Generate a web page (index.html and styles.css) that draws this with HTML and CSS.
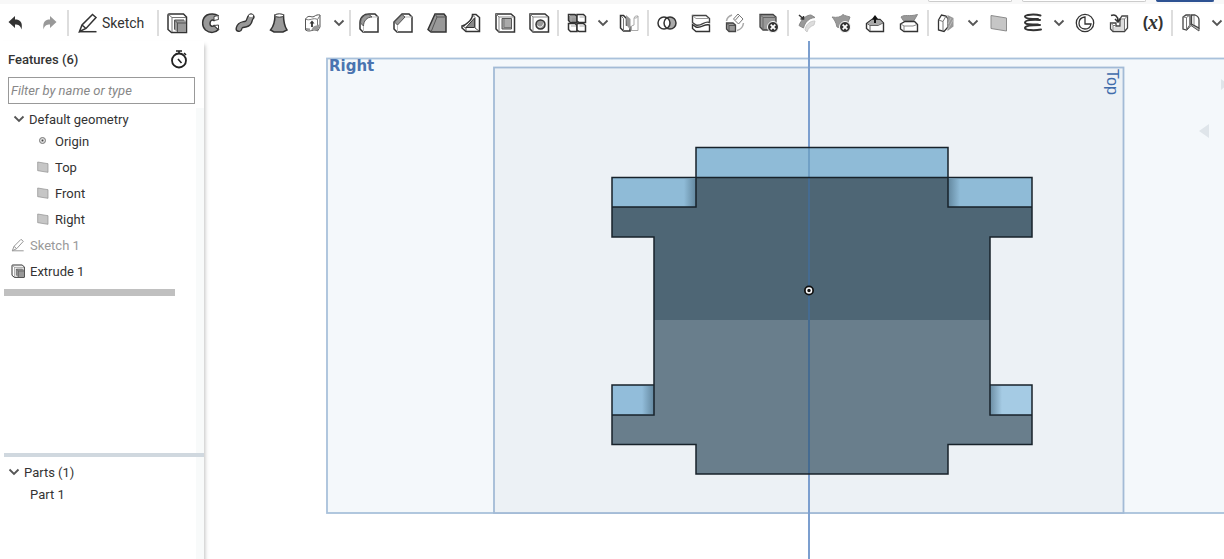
FILE: index.html
```html
<!DOCTYPE html>
<html lang="en">
<head>
    <meta charset="UTF-8">
    <meta name="viewport" content="width=device-width, initial-scale=1.0">
    <title>Part Studio</title>
    <link rel="stylesheet" href="styles.css">
</head>

<body>
<svg class="defs" aria-hidden="true">
    <symbol id="chevron" viewBox="0 0 12 12"><path d="M1.5 3.5 L6 8 L10.500 3.500" fill="none" stroke="#555" stroke-width="1.800"/></symbol>
    <symbol id="pencil" viewBox="0 0 24 24">
        <path d="M3.500 20.500 L6 14 L16.500 3.500 L20 6.500 L10 17.500 Z M6 14 L10 17.500" fill="none" stroke="currentColor" stroke-width="1.500"/>
        <path d="M3 20.700 H20.500" stroke="currentColor" stroke-width="1.500"/>
    </symbol>
    <symbol id="extrude" viewBox="0 0 24 24">
        <path d="M3 4 Q3 3 4 3 H18.500 L21.500 6 V21.500 H6.500 L3 18.500 Z" fill="#fff" stroke="#333" stroke-width="1.500"/>
        <path d="M3.500 3.500 L7 6.500 H21 M7 6.500 V21" fill="none" stroke="#777"/>
        <path d="M9.500 9 H19 L21 10 V21 H12 L9.500 18.500 Z" fill="#999"/>
        <path d="M9.500 18.500 V9 H19 M9.500 9 L12.500 12 H21 M12.500 12 V21" fill="none" stroke="#555"/>
    </symbol>
    <symbol id="plane" viewBox="0 0 24 24"><path d="M4 4.500 L19.500 7 V20 L4 17.500 Z" fill="#c6c6c6" stroke="#8c8c8c"/></symbol>
</svg>

<div class="docbar">
    <button class="doc-btn" aria-label="Help"></button>
    <button class="doc-btn doc-wide" aria-label="Account"></button>
    <button class="doc-btn doc-share" aria-label="Share"></button>
</div>

<div class="toolbar">
    <button class="tool undo" aria-label="Undo"><svg viewBox="0 0 24 24"><path d="M4.500 11 L11 5 V8.500 C16 8.500 19 11 17.500 18.500 C16.500 14.500 14.500 13.500 11 13.500 V17 Z" fill="#333"/></svg></button>
    <button class="tool" aria-label="Redo"><svg viewBox="0 0 24 24"><path d="M19.500 11 L13 5 V8.500 C8 8.500 5.500 11 6.500 18.500 C7.500 14.500 9.500 13.500 13 13.500 V17 Z" fill="#999"/></svg></button>
    <span class="sep"></span>
    <button class="sketch"><svg><use href="#pencil"/></svg>Sketch</button>
    <span class="sep"></span>

    <button class="tool" aria-label="Extrude"><svg><use href="#extrude"/></svg></button>
    <button class="tool" aria-label="Revolve"><svg viewBox="0 0 24 24"><path d="M19 4.500 C16 2.500 11 2.500 8 4 C2.500 7.500 2.500 15 6.500 19 C11 22.500 16.500 22 19.500 18.500 L15 14.500 C13 16 11 15 11 12.500 C11 9.500 13 8.500 15 9.500 Z" fill="#999" stroke="#333" stroke-width="1.500"/><path d="M15 9.500 V5.500 L19 4.500 L19.500 8.500 Z M15 14.500 L19.500 14 V18.500 Z" fill="#fff" stroke="#444"/></svg></button>
    <button class="tool" aria-label="Sweep"><svg viewBox="0 0 24 24"><path d="M6 17.500 C7 13.500 9 14 13 13 C17.500 12 15.500 8 18 6" fill="none" stroke="#333" stroke-width="7" stroke-linecap="round"/><path d="M6 17.500 C7 13.500 9 14 13 13 C17.500 12 15.500 8 18 6" fill="none" stroke="#999" stroke-width="4.300" stroke-linecap="round"/><ellipse cx="18" cy="4.700" rx="2.300" ry="1.200" fill="#fff"/></svg></button>
    <button class="tool" aria-label="Loft"><svg viewBox="0 0 24 24"><path d="M8 4 C8 11 6 16 3.500 19 L7 21 H16 L20 19 C18 16 16.500 11 16.500 4 Z" fill="#999" stroke="#333" stroke-width="1.500"/><ellipse cx="12.300" cy="4.500" rx="4.200" ry="1.700" fill="#fff" stroke="#333"/></svg></button>
    <button class="tool" aria-label="Thicken"><svg viewBox="0 0 24 24"><path d="M4.500 8 C8 3 10 7 13 5.500 C15 4 17 3.500 19 4 V16 L16.500 20 C13 17 9 22 4.500 19 Z" fill="#fff" stroke="#555"/><path d="M4.500 8 C9 10.500 12 6 16.500 8.500 L19 4.500 M16.500 8.500 V20" fill="none" stroke="#777"/><path d="M12 16 C14 14 17 15 18.500 13 V16 L16 19.500 C14 18 12 19 10 19.500 Z M5 17 L9 17.500 V20 L5 19 Z" fill="#999"/><path d="M11 16 V11" stroke="#333" stroke-width="1.800"/><path d="M8.500 12.500 L11 9.500 L13.500 12.500 Z" fill="#333"/></svg></button>
    <button class="more" aria-label="More solid tools"><svg><use href="#chevron"/></svg></button>
    <span class="sep"></span>

    <button class="tool" aria-label="Fillet"><svg viewBox="0 0 24 24"><path d="M3 12 C3 6 7 3 12 3 H18 L21 6 V21 H6 L3 18 Z" fill="#fff" stroke="#333" stroke-width="1.500"/><path d="M3.500 12 C3.500 7 7 3.500 12 3.500 L15 6 C10 6 6.500 10 6.500 15 L3.500 12 Z" fill="#999" stroke="#555"/><path d="M15 6 H21 M6.500 15 V21" stroke="#bbb"/></svg></button>
    <button class="tool" aria-label="Chamfer"><svg viewBox="0 0 24 24"><path d="M3 11 L11 3 H18 L21 6 V21 H6 L3 18 Z" fill="#fff" stroke="#333" stroke-width="1.500"/><path d="M3.500 11 L11 3.500 L14 6 L6.500 14 Z" fill="#999" stroke="#555"/><path d="M14 6 H21 M6.500 14 V21" stroke="#bbb"/></svg></button>
    <button class="tool" aria-label="Draft"><svg viewBox="0 0 24 24"><path d="M10 3 H19 L21 5.500 V21 H6 L3 18.500 Z" fill="#999" stroke="#333" stroke-width="1.500"/><path d="M10 3 L12 6 H21 M12 6 L6 21" fill="none" stroke="#555"/></svg></button>
    <button class="tool" aria-label="Rib"><svg viewBox="0 0 24 24"><path d="M13.500 3.500 H17 L20.500 6.500 V20.500 H7 L3 17 V15 C6 14.500 7 13.500 9 11.500 C12 9 13.500 7 13.500 3.500 Z" fill="#fff" stroke="#333" stroke-width="1.500"/><path d="M15.500 7 V16.500 H7 Z" fill="#888" stroke="#333"/><path d="M13.500 4 L16 6.500 V17 L20 20 M3.500 15 L7 17 V20" fill="none" stroke="#555"/></svg></button>
    <button class="tool" aria-label="Shell"><svg viewBox="0 0 24 24"><path d="M3 3 H18 L21.500 6 V21 H6 L3 18 Z" fill="#fff" stroke="#333" stroke-width="1.500"/><path d="M3 3 L6 6 H21 M6 6 V21" fill="none" stroke="#888"/><path d="M9 7.500 H18.500 V18 H9 Z" fill="#aaa" stroke="#555"/><path d="M11 8 V16.500 H18" fill="none" stroke="#777"/></svg></button>
    <button class="tool" aria-label="Hole"><svg viewBox="0 0 24 24"><path d="M3 3 H18 L21.500 6 V21 H6 L3 18 Z" fill="#fff" stroke="#333" stroke-width="1.500"/><path d="M3 3 L6 6 H21 M6 6 V21" fill="none" stroke="#888"/><circle cx="13.500" cy="13.500" r="4.500" fill="#999" stroke="#333" stroke-width="1.500"/><path d="M10.500 14.500 C12 17.500 16 16 16.500 12.500" fill="none" stroke="#fff"/></svg></button>
    <span class="sep"></span>

    <button class="tool" aria-label="Linear pattern"><svg viewBox="0 0 24 24"><g fill="#fff" stroke="#333" stroke-width="1.500"><path d="M3.500 3.500 H10 L12 5.500 V11.500 H5.500 L3.500 9.500 Z" fill="#999"/><path d="M12 3.500 H18.500 L20.500 5.500 V11.500 H14 L12 10 Z"/><path d="M3.500 12.500 H10 L12 14.500 V20.500 H5.500 L3.500 18.500 Z"/><path d="M12 12.500 H18.500 L20.500 14.500 V20.500 H14 L12 19 Z"/></g><path d="M4 4 L6 6 H11 M6 6 V11 M14.500 6 H20 M6 15 H11 M14.500 15 H20" fill="none" stroke="#aaa"/></svg></button>
    <button class="more" aria-label="More patterns"><svg><use href="#chevron"/></svg></button>
    <button class="tool" aria-label="Mirror"><svg viewBox="0 0 24 24"><path d="M3.500 4.500 H6.500 L9.500 7.500 V14 H11 L13 16 V20 H6.500 L3.500 17 Z" fill="#fff" stroke="#333" stroke-width="1.500"/><path d="M4 5 L6.500 7.500 V20" fill="none" stroke="#777"/><path d="M9 4 L13.500 8 V19 L11 16 L9.500 14 Z" fill="#999"/><path d="M14.500 20 V15 L17 14 V7 L18.500 5 H21 V19.500 H14.500 M17 7 H19.500 L21 5" fill="none" stroke="#aaa"/></svg></button>
    <span class="sep"></span>

    <button class="tool" aria-label="Boolean"><svg viewBox="0 0 24 24"><circle cx="15" cy="12" r="6" fill="#aaa"/><path d="M12 7 A6 6 0 0 1 12 17 A6 6 0 0 1 12 7" fill="#fff"/><circle cx="9" cy="12" r="6" fill="none" stroke="#333" stroke-width="1.500"/><circle cx="15" cy="12" r="6" fill="none" stroke="#333" stroke-width="1.500"/></svg></button>
    <button class="tool" aria-label="Split"><svg viewBox="0 0 24 24"><path d="M3.500 11.500 V4.500 H17 L20.500 7.500 V11.500 C15 9.500 13 15.500 7 14 Z" fill="#fff" stroke="#444" stroke-width="1.400"/><path d="M3.500 4.500 L7 7.500 H20 M7 16 V20" fill="none" stroke="#999"/><path d="M3.500 13.500 V17.500 L7 20.500 H20.500 V14 C15 12.500 13 17.500 7 16 Z" fill="#fff" stroke="#333" stroke-width="1.400"/></svg></button>
    <button class="tool" aria-label="Transform"><svg viewBox="0 0 24 24"><path d="M3.500 12 H10 L12.500 14 V20.500 H6 L3.500 18 Z" fill="#999" stroke="#444" stroke-width="1.300"/><path d="M4 12.500 L6 14.500 H12 M6 14.500 V20" fill="none" stroke="#555"/><path d="M10.500 8 L15 3 L20 8 L15.500 13 Z M12.500 9 L16 5" fill="#fff" stroke="#777"/><path d="M3.500 10 C4 7 6 5 9 4 M20.500 12 C20 16 18 18.500 14 19.500" fill="none" stroke="#aaa" stroke-width="1.500"/></svg></button>
    <button class="tool" aria-label="Delete part"><svg viewBox="0 0 24 24"><path d="M3 3.500 H16 L19 6 V19 H6 L3 16 Z" fill="#999" stroke="#444" stroke-width="1.300"/><path d="M3 3.500 L6 6.500 H19 M6 6.500 V19" fill="none" stroke="#666"/><circle cx="16" cy="16" r="5.500" fill="#333" stroke="#fff"/><path d="M13.700 13.700 L18.300 18.300 M18.300 13.700 L13.700 18.300" stroke="#fff" stroke-width="1.800"/></svg></button>
    <span class="sep"></span>

    <button class="tool" aria-label="Modify fillet"><svg viewBox="0 0 24 24"><path d="M10 19 C11 13 15 10 20 10 L19 14 C16 15 13 17 12 21 Z" fill="#ddd" stroke="#ccc"/><path d="M4 14.500 C6 9 11 4 16 4 L20 6.500 C14 7 10 11 8.500 17 Z" fill="#999" stroke="#888"/><path d="M4 4 L8.500 8 M8.500 5 V8 H5.500" fill="none" stroke="#333" stroke-width="1.500"/></svg></button>
    <button class="tool" aria-label="Delete face"><svg viewBox="0 0 24 24"><path d="M3 6 C8 7 12 6 14 3.500 C16 5 18 5 21 6 L18 14 C14 17 11 17 8 16 C7 11 5 8 3 6 Z" fill="#999" stroke="#888"/><circle cx="16" cy="16" r="5.500" fill="#333" stroke="#fff"/><path d="M13.700 13.700 L18.300 18.300 M18.300 13.700 L13.700 18.300" stroke="#fff" stroke-width="1.800"/></svg></button>
    <button class="tool" aria-label="Move face"><svg viewBox="0 0 24 24"><path d="M3.500 12.500 L9 8.500 H17 L20.500 12 V20.500 H7 L3.500 17.500 Z" fill="#fff" stroke="#333" stroke-width="1.400"/><path d="M4.500 12.500 L7 14 H15 L20 12 L17 9 H9 Z" fill="#aaa"/><path d="M4 12.500 L7 14.500 H15 L20 12 M7 14.500 V20" fill="none" stroke="#666"/><path d="M12 12 V6" stroke="#111" stroke-width="2"/><path d="M9 8 L12 4 L15 8 Z" fill="#111"/></svg></button>
    <button class="tool" aria-label="Replace face"><svg viewBox="0 0 24 24"><path d="M4 6 C8 3 12 6 20.500 3.500 L17 9.500 C13 11 10 8 7 10.500 Z" fill="#999" stroke="#888"/><path d="M3.500 13 L8 10.500 H17.500 L20.500 13.500 V20.500 H7 L3.500 18 Z" fill="#fff" stroke="#333" stroke-width="1.400"/><path d="M4 13 L7 15 H16 L20 13.500 M7 15 V20" fill="none" stroke="#888"/></svg></button>
    <span class="sep"></span>

    <button class="tool" aria-label="Offset surface"><svg viewBox="0 0 24 24"><path d="M3.500 9 L6.500 4 L11 5 L13 8 V16 L9 20.500 L3.500 19 Z" fill="#fff" stroke="#333" stroke-width="1.300"/><path d="M3.500 9 L8 10.500 V20 M8 10.500 L11 5" fill="none" stroke="#777"/><path d="M12.500 4 L18.500 7 V15.500 L12.500 20 Z" fill="#999"/><path d="M13 18 L18 9 M13 13 L16 7" stroke="#bbb"/></svg></button>
    <button class="more" aria-label="More surface tools"><svg><use href="#chevron"/></svg></button>
    <button class="tool" aria-label="Plane"><svg><use href="#plane"/></svg></button>
    <button class="tool" aria-label="Helix"><svg viewBox="0 0 24 24"><path d="M19.500 4.500 C14 3 4 3.500 4 5.500 C4 7.500 10 8 17 8 M19 9 C12 8.500 4 9 4 11.500 C4 13.500 10 13.500 17 13.500 M19 14 C12 14 4 14.500 4 17 C4 19.500 14 19.500 20 18.500" fill="none" stroke="#333" stroke-width="2" stroke-linecap="round"/></svg></button>
    <button class="more" aria-label="More curves"><svg><use href="#chevron"/></svg></button>
    <button class="tool" aria-label="Mate connector"><svg viewBox="0 0 24 24"><circle cx="12" cy="12" r="8.700" fill="#fff" stroke="#333" stroke-width="1.300"/><path d="M12 6 V13 H18 C17.500 16 15 18 12 18 C4 17.500 4 7 12 6 Z" fill="none" stroke="#333" stroke-width="1.300"/></svg></button>
    <button class="tool" aria-label="Import"><svg viewBox="0 0 24 24"><path d="M3.500 12 H9 V15 H13 V8 L15 5 H20.500 V17 L17.500 20.500 H6 L3.500 18 Z" fill="#fff" stroke="#444" stroke-width="1.300"/><path d="M13 8 H17.500 V20 M17.500 8 L20.500 5 M4 12 L6 14.500 V20 M6 14.500 H9" fill="none" stroke="#777"/><path d="M14 9 H17 V19.500 H7 V16 H14 Z" fill="#ddd"/><path d="M4 4.500 C8 3 11 5 11 10 M8 8 L11 11 L13.500 7.500" fill="none" stroke="#333" stroke-width="1.500"/></svg></button>
    <button class="tool variable" aria-label="Variable">(<i>x</i>)</button>
    <span class="sep"></span>

    <button class="tool" aria-label="Sheet metal"><svg viewBox="0 0 24 24"><path d="M4 6 L7 4 H11 V14 L7.500 19 L4 18 Z" fill="#fff" stroke="#444" stroke-width="1.300"/><path d="M7.500 6.500 V19 M4 6 L7.500 6.500 L11 4" fill="none" stroke="#777"/><path d="M11 13.500 L14 12 L20 17 V20 L12 14.500 L8 19" fill="#bbb" stroke="#555"/><path d="M12.500 4 H16 C18.500 5 20 6.500 20 9 V17 L12.500 13 Z" fill="#fff" stroke="#444" stroke-width="1.300"/><path d="M15 5 V14" stroke="#888"/></svg></button>
    <button class="more" aria-label="More sheet metal"><svg><use href="#chevron"/></svg></button>
</div>

<div class="workspace">
    <aside class="sidebar">
        <div class="features">
            <div class="panel-head">
                <h2>Features (6)</h2>
                <button class="timer" aria-label="Rebuild times"><svg viewBox="0 0 20 20"><circle cx="10" cy="11.500" r="7" fill="none" stroke="#222" stroke-width="1.800"/><path d="M7 2 H13 M10 2 V5 M15 4 L17 6 M9 10 L12.500 14" stroke="#222" stroke-width="1.600"/></svg></button>
            </div>
            <input class="filter" type="text" aria-label="Filter features" placeholder="Filter by name or type">
            <div class="tree">
                <button class="row group"><svg><use href="#chevron"/></svg>Default geometry</button>
                <ul>
                    <li class="row child origin"><svg viewBox="0 0 16 16"><circle cx="7.500" cy="7.500" r="3" fill="#ddd" stroke="#777"/><circle cx="7.500" cy="7.500" r="1" fill="#444"/></svg>Origin</li>
                    <li class="row child"><svg><use href="#plane"/></svg>Top</li>
                    <li class="row child"><svg><use href="#plane"/></svg>Front</li>
                    <li class="row child"><svg><use href="#plane"/></svg>Right</li>
                    <li class="row hidden-item"><svg><use href="#pencil"/></svg>Sketch 1</li>
                    <li class="row"><svg><use href="#extrude"/></svg>Extrude 1</li>
                </ul>
                <div class="rollback"></div>
            </div>
        </div>
        <div class="splitter"></div>
        <div class="parts">
            <button class="row group"><svg><use href="#chevron"/></svg>Parts (1)</button>
            <ul>
                <li class="row part">Part 1</li>
            </ul>
        </div>
    </aside>

    <main class="viewport">
        <svg class="scene" viewBox="204 41 1020 518" preserveAspectRatio="xMinYMin slice">
            <defs>
                <linearGradient id="shadeRight"><stop offset="0" stop-color="#456478" stop-opacity="0"/><stop offset="1" stop-color="#456478" stop-opacity=".6"/></linearGradient>
                <linearGradient id="shadeLeft"><stop offset="0" stop-color="#456478" stop-opacity=".6"/><stop offset="1" stop-color="#456478" stop-opacity="0"/></linearGradient>
            </defs>

            <!-- reference planes -->
            <rect x="327" y="58.500" width="960" height="454.500" fill="#f4f8fb" stroke="#a9c1db" stroke-width="1.800"/>
            <rect x="494" y="67.500" width="629.500" height="445.500" fill="#ecf1f5" stroke="#a3bbd6" stroke-width="1.800"/>
            <text class="plane-right" x="329" y="71">Right</text>
            <text class="plane-top" transform="translate(1107 69) rotate(90)">Top</text>
            <path d="M1199 131 L1209 124 V138 Z M1221 79 L1228 84 L1221 90 Z" fill="#dfe5ea"/>
            <path d="M809 41 V559" stroke="#7c9fcf" stroke-width="2"/>

            <!-- part -->
            <path d="M696 148 H948 V178 H696 Z M612 178 H696 V207 H612 Z M948 178 H1032 V207 H948 Z" fill="#8fbbd7"/>
            <path d="M612 385 H654 V415 H612 Z" fill="#92bdda"/>
            <path d="M990 385 H1032 V415 H990 Z" fill="#a5cbe4"/>
            <rect x="684" y="179" width="12" height="28" fill="url(#shadeRight)"/>
            <rect x="642" y="386" width="12" height="28" fill="url(#shadeRight)"/>
            <rect x="948" y="179" width="12" height="28" fill="url(#shadeLeft)"/>
            <rect x="990" y="386" width="12" height="28" fill="url(#shadeLeft)"/>
            <path d="M696 178 H948 V207 H1032 V237 H990 V320 H654 V237 H612 V207 H696 Z" fill="#4e6675"/>
            <path d="M654 320 H990 V415 H1032 V444.500 H948 V474 H696 V444.500 H612 V415 H654 Z" fill="#697e8c"/>
            <path d="M809 148 V178" stroke="#70a0c6" stroke-width="2"/>
            <path d="M809 178 V474" stroke="#456b91" stroke-width="2"/>
            <path d="M696 147.500 H948 V207 H1032 V237 H990 V415 H1032 V444.500 H948 V474 H696 V444.500 H612 V415 H654 V237 H612 V207 H696 Z M696 177.500 H948 M696 177.500 H612 V207 M948 177.500 H1032 V207 M654 385 H612 V415 M990 385 H1032 V415" fill="none" stroke="#17222a" stroke-width="1.500"/>
            <circle cx="809" cy="290.500" r="4" fill="#111" stroke="#111" stroke-width="2"/>
            <circle cx="809" cy="290.500" r="2.500" fill="#111" stroke="#fff" stroke-width="1.500"/>
        </svg>
    </main>
</div>
</body>

</html>
```
FILE: styles.css
```css
*{
    box-sizing: border-box;
}
body{
    margin: 0;
    height: 100vh;
    display: flex;
    flex-direction: column;
    overflow: hidden;
    font-family: Roboto, "Liberation Sans", sans-serif;
    font-size: 14px;
    color: #333;
    background-color: #fff;
}
button{
    margin: 0;
    padding: 0;
    border: 0;
    background: none;
    font: inherit;
    color: inherit;
}
ul{
    margin: 0;
    padding: 0;
    list-style: none;
}
.defs{
    position: absolute;
    width: 0;
    height: 0;
}

/* bottom edge of the document bar */
.docbar{
    display: flex;
    justify-content: flex-end;
    align-items: flex-start;
    gap: 10px;
    flex: none;
    height: 4px;
    padding-right: 10px;
    background-color: #f8f8f8;
}
.doc-btn{
    width: 84px;
    height: 2px;
    border: 1px solid #ccc;
    border-top: 0;
    border-radius: 0 0 3px 3px;
    background-color: #fff;
}
.doc-wide{
    width: 124px;
}
.doc-share{
    width: 58px;
    border-color: #2d5292;
    background-color: #2d5292;
}

.toolbar{
    display: flex;
    align-items: center;
    flex: none;
    height: 37px;
    overflow: hidden;
    background-color: #fff;
}
.tool{
    display: flex;
    align-items: center;
    justify-content: center;
    flex: none;
    width: 34px;
    height: 34px;
}
.tool svg{
    width: 24px;
    height: 24px;
}
.undo{
    width: 32px;
}
.sketch{
    display: flex;
    align-items: center;
    gap: 2px;
    flex: none;
    width: 86px;
    height: 34px;
    padding-left: 6px;
    font-size: 14px;
}
.sketch svg{
    width: 24px;
    height: 24px;
}
.more{
    display: flex;
    align-items: center;
    justify-content: center;
    flex: none;
    width: 18px;
    height: 34px;
}
.more svg{
    width: 12px;
    height: 12px;
}
.sep{
    flex: none;
    width: 2px;
    height: 26px;
    margin: 0 1px;
    background-color: #ddd;
}
.variable{
    font-family: "Liberation Sans", sans-serif;
    font-size: 16px;
    font-weight: bold;
}
.variable i{
    font-family: "Liberation Serif", serif;
    font-size: 20px;
}

.workspace{
    display: flex;
    flex: 1;
    min-height: 0;
}
.sidebar{
    display: flex;
    flex-direction: column;
    flex: none;
    width: 204px;
    z-index: 1;
    background-color: #fff;
    box-shadow: 1px 4px 4px rgba(0,0,0,0.25);
}
.features{
    display: flex;
    flex-direction: column;
    flex: 1;
    min-height: 0;
}
.panel-head{
    display: flex;
    align-items: center;
    justify-content: space-between;
    height: 36px;
    padding: 0 15px 0 8px;
}
.panel-head h2{
    margin: 0;
    font-size: 13px;
    font-weight: 500;
}
.timer{
    width: 20px;
    height: 20px;
}
.timer svg{
    display: block;
    width: 20px;
    height: 20px;
}
.filter{
    flex: none;
    height: 27px;
    margin: 0 9px 0 8px;
    padding: 0 2px;
    border: 1px solid #999;
    border-radius: 0;
    font: italic 13px Roboto, "Liberation Sans", sans-serif;
}
.filter::placeholder{
    color: #888;
}
.tree{
    flex: 1;
    margin-top: 4px;
    border-right: 8px solid #f8fafa;
}
.row{
    display: flex;
    align-items: center;
    gap: 4px;
    height: 26px;
    padding-left: 10px;
    font-size: 13px;
}
.row svg{
    width: 16px;
    height: 16px;
}
.group{
    height: 22px;
    padding-left: 13px;
}
.group svg{
    width: 12px;
    height: 12px;
}
.child{
    padding-left: 35px;
}
.origin{
    height: 22px;
    margin-bottom: 2px;
}
.hidden-item{
    color: #999;
}
.rollback{
    height: 7px;
    margin: 5px 21px 0 4px;
    background-color: #c0c0c0;
}
.splitter{
    flex: none;
    height: 4px;
    margin-left: 4px;
    background-color: #d0d8df;
}
.parts{
    flex: none;
    height: 102px;
    padding-top: 4px;
    border-right: 8px solid #f8fafa;
}
.parts .group{
    padding-left: 8px;
}
.part{
    height: 22px;
    padding-left: 30px;
}

.viewport{
    flex: 1;
    min-width: 0;
}
.scene{
    display: block;
    width: 100%;
    height: 100%;
}
.plane-right{
    font: bold 15px "DejaVu Sans", sans-serif;
    fill: #4a74b0;
}
.plane-top{
    font: 16px "Liberation Sans Narrow", "Liberation Sans", sans-serif;
    fill: #3f6cab;
}
```
